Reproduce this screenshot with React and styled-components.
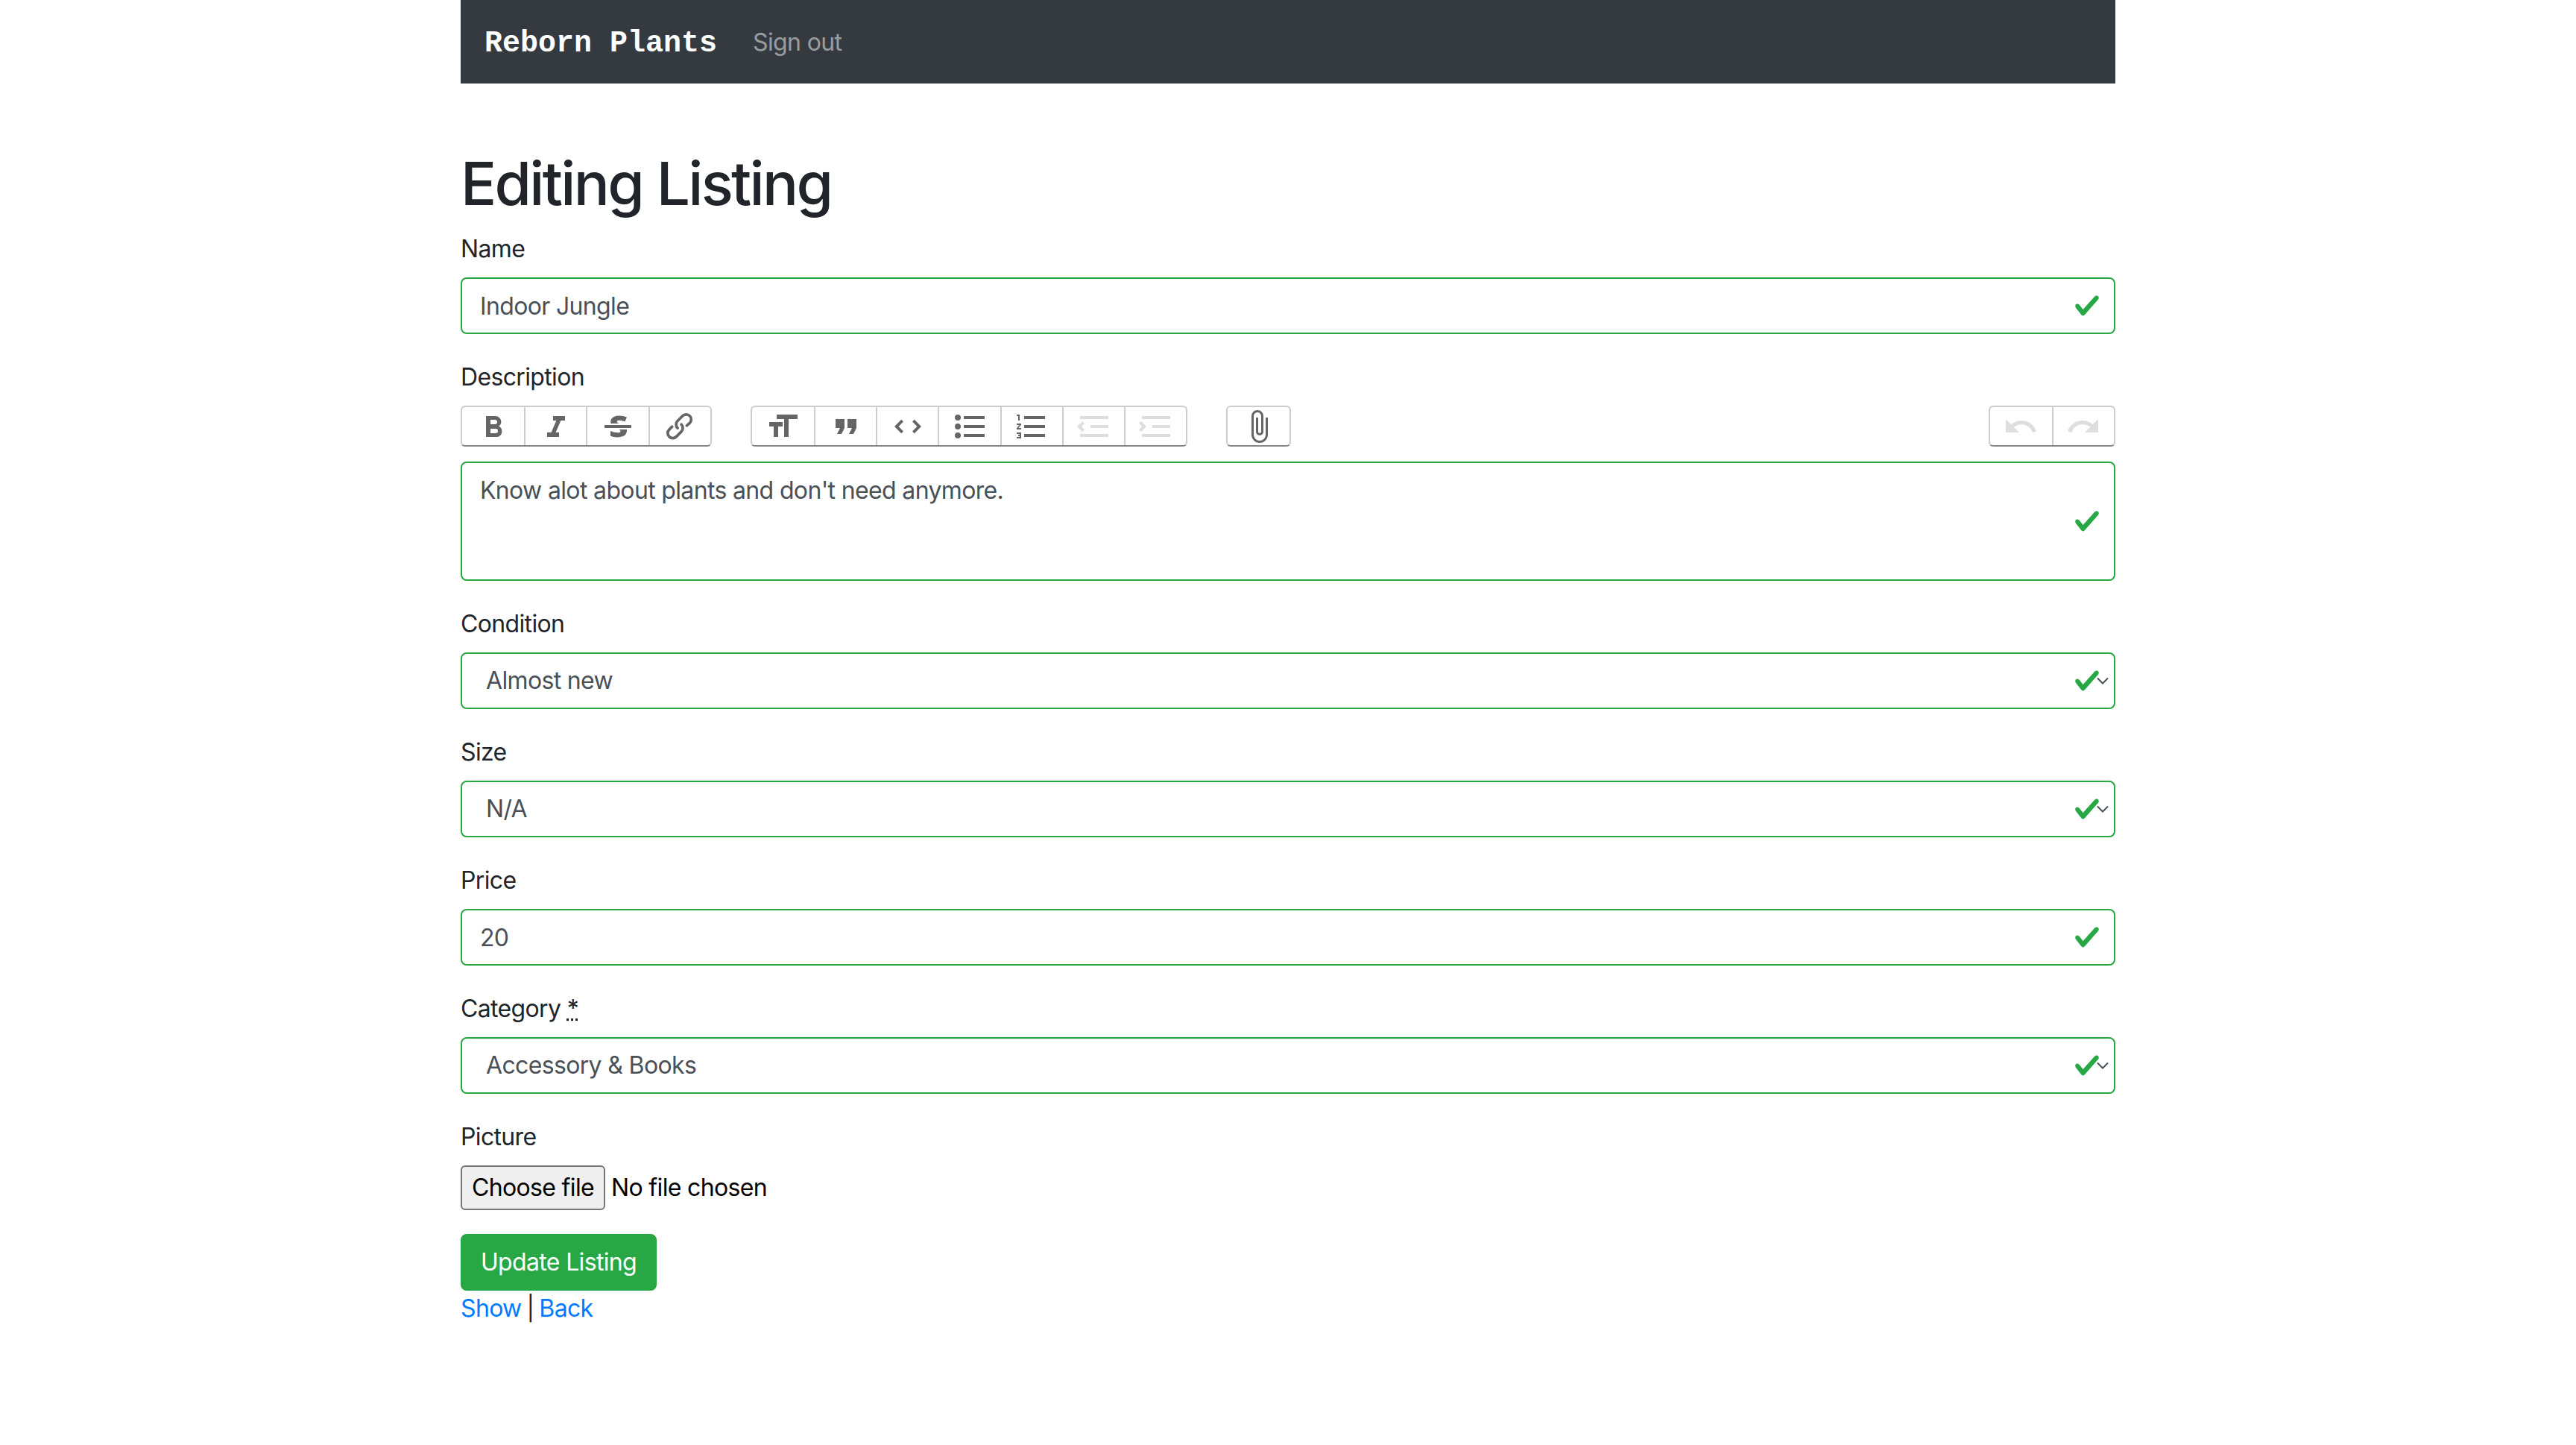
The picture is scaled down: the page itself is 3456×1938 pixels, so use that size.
import React from "react";
import styled, { createGlobalStyle } from "styled-components";

const GlobalStyle = createGlobalStyle`
  * { box-sizing: border-box; }
  body {
    margin: 0;
    background: #fff;
    color: #212529;
    font-family: Inter, "Liberation Sans", sans-serif;
    font-size: 32px;
    line-height: 1.5;
    letter-spacing: -0.65px;
  }
`;

const icons = {
  bold: "M15.6 11.8c1-.7 1.6-1.8 1.6-2.8a4 4 0 0 0-4-4H7v14h7c2.1 0 3.7-1.7 3.7-3.8 0-1.5-.8-2.8-2.1-3.4zM10 7.5h3a1.5 1.5 0 1 1 0 3h-3v-3zm3.5 9H10v-3h3.5a1.5 1.5 0 1 1 0 3z",
  italic: "M10 5v3h2.2l-3.4 8H6v3h8v-3h-2.2l3.4-8H18V5h-8z",
  strike: "M12.73 14l.28.14c.26.15.45.3.57.44.12.14.18.3.18.5 0 .3-.15.56-.44.75-.3.2-.76.3-1.39.3A13.52 13.52 0 0 1 7 14.95v3.37a10.64 10.64 0 0 0 4.84.88c1.26 0 2.35-.19 3.28-.56.93-.37 1.64-.9 2.14-1.57s.74-1.45.74-2.32c0-.26-.02-.51-.06-.75h-5.21zm-5.5-4c-.08-.34-.12-.7-.12-1.1 0-1.29.52-2.3 1.58-3.02 1.05-.72 2.5-1.08 4.34-1.08 1.62 0 3.28.34 4.97 1l-1.3 2.93c-1.47-.6-2.73-.9-3.8-.9-.55 0-.96.08-1.2.26-.26.17-.38.38-.38.64 0 .27.16.52.48.74.17.12.53.3 1.05.53H7.23zM3 13h18v-2H3v2z",
  link: "M9.88 13.7a4.3 4.3 0 0 1 0-6.07l3.37-3.37a4.26 4.26 0 0 1 6.07 0 4.3 4.3 0 0 1 0 6.06l-1.96 1.72a.91.91 0 1 1-1.3-1.3l1.97-1.71a2.46 2.46 0 0 0-3.48-3.48l-3.38 3.37a2.46 2.46 0 0 0 0 3.48.91.91 0 1 1-1.3 1.3z M4.25 19.46a4.3 4.3 0 0 1 0-6.07l1.93-1.9a.91.91 0 1 1 1.3 1.3l-1.93 1.9a2.46 2.46 0 0 0 3.48 3.48l3.37-3.38c.96-.96.96-2.52 0-3.48a.91.91 0 1 1 1.3-1.3 4.3 4.3 0 0 1 0 6.07l-3.38 3.38a4.26 4.26 0 0 1-6.07 0z",
  heading: "M12 9v3H9v7H6v-7H3V9h9zM8 4h14v3h-6v12h-3V7H8V4z",
  quote: "M6 17h3l2-4V7H5v6h3zm8 0h3l2-4V7h-6v6h3z",
  code: "M18.2 12L15 15.2l1.4 1.4L21 12l-4.6-4.6L15 8.8l3.2 3.2zM5.8 12L9 8.8 7.6 7.4 3 12l4.6 4.6L9 15.2 5.8 12z",
  bullets: "M4 4a2 2 0 1 0 0 4 2 2 0 0 0 0-4zm0 6a2 2 0 1 0 0 4 2 2 0 0 0 0-4zm0 6a2 2 0 1 0 0 4 2 2 0 0 0 0-4zm4 3h14v-2H8v2zm0-6h14v-2H8v2zm0-8v2h14V5H8z",
  numbers: "M2 17h2v.5H3v1h1v.5H2v1h3v-4H2v1zm1-9h1V4H2v1h1v3zm-1 3h1.8L2 13.1v.9h3v-1H3.2L5 10.9V10H2v1zm5-6v2h14V5H7zm0 14h14v-2H7v2zm0-6h14v-2H7v2z",
  decrease: "M3 19h19v-2H3v2zm7-6h12v-2H10v2zm-8.3-.3l2.8 2.9L6 14.2 4 12l2-2-1.4-1.5L1 12l.7.7zM3 5v2h19V5H3z",
  increase: "M3 19h19v-2H3v2zm7-6h12v-2H10v2zm-6.9-1L1 14.2l1.4 1.4L6 12l-.7-.7-2.9-2.9L1 9.8 3.1 12zM3 5v2h19V5H3z",
  attach: "M16.5 6v11.5a4 4 0 1 1-8 0V5a2.5 2.5 0 0 1 5 0v10.5a1 1 0 1 1-2 0V6H10v9.5a2.5 2.5 0 0 0 5 0V5a4 4 0 1 0-8 0v12.5a5.5 5.5 0 0 0 11 0V6h-1.5z",
  undo: "M12.5 8c-2.6 0-5 1-6.9 2.6L2 7v9h9l-3.6-3.6A8 8 0 0 1 20 16l2.4-.8a10.5 10.5 0 0 0-10-7.2z",
  redo: "M18.4 10.6a10.5 10.5 0 0 0-16.9 4.6L4 16a8 8 0 0 1 12.7-3.6L13 16h9V7l-3.6 3.6z",
};

const Container = styled.div`
  width: 2280px;
  margin: 0 auto;
  padding: 0 30px;
`;

const Navbar = styled.nav`
  display: flex;
  align-items: center;
  height: 112px;
  padding: 0 32px;
  background: #343a40;
`;

const Brand = styled.a`
  margin-right: 48px;
  padding-top: 6px;
  color: #fff;
  font-family: "Liberation Mono", monospace;
  font-size: 40px;
  font-weight: 700;
  letter-spacing: 0;
`;

const NavLink = styled.a`
  padding-top: 2px;
  color: rgba(255, 255, 255, 0.5);
`;

const Title = styled.h1`
  margin: 86px 0 14px;
  font-size: 80px;
  font-weight: 500;
  line-height: 1.2;
  letter-spacing: -2.7px;
`;

const FormGroup = styled.div`
  margin-bottom: 32px;
`;

const Label = styled.label`
  display: block;
  margin-bottom: 14px;
  padding-top: 2px;
`;

const Abbr = styled.abbr`
  text-decoration: underline dotted;
`;

const Field = styled.div`
  position: relative;
  color: #495057;
`;

const Control = styled.input`
  display: block;
  width: 100%;
  height: 76px;
  padding: 12px 88px 12px 24px;
  border: 2px solid #28a745;
  border-radius: 8px;
  background: #fff;
  color: #495057;
  font: inherit;
  letter-spacing: inherit;
  outline: none;
`;

const SelectControl = styled(Control).attrs({ as: "select" })`
  appearance: none;
  padding-left: 32px;
`;

const Editor = styled.div`
  min-height: 160px;
  padding: 13px 88px 8px 24px;
  border: 2px solid #28a745;
  border-radius: 8px;
  color: #495057;
`;

const Check = styled.svg`
  position: absolute;
  top: 50%;
  right: 20px;
  width: 36px;
  height: 36px;
  transform: translateY(-50%);
  pointer-events: none;
`;

const Chevron = styled.svg`
  position: absolute;
  top: 33px;
  right: 9px;
  width: 16px;
  height: 10px;
  pointer-events: none;
`;

const Toolbar = styled.div`
  display: flex;
  margin-bottom: 20px;
`;

const ButtonGroup = styled.div`
  display: flex;
  margin-left: ${(p) => (p.$first ? "0" : "52px")};
  ${(p) => p.$push && "margin-left: auto;"}
  border: 2px solid #ccc;
  border-bottom-color: #888;
  border-radius: 6px;
`;

const ToolButton = styled.button`
  display: flex;
  align-items: center;
  justify-content: center;
  width: 83.2px;
  height: 51px;
  padding: 0;
  border: 0;
  border-left: 2px solid #ccc;
  background: transparent;
  &:first-child {
    border-left: 0;
  }
  svg {
    width: 48px;
    height: 48px;
    fill: #000;
    opacity: ${(p) => (p.disabled ? 0.125 : 0.6)};
  }
`;

const FileRow = styled.div`
  display: flex;
  align-items: center;
  gap: 8px;
  height: 60px;
  color: #000;
`;

const FileButton = styled.button`
  width: 194px;
  height: 60px;
  padding: 0;
  border: 2px solid #767676;
  border-radius: 6px;
  background: #efefef;
  color: #000;
  font: inherit;
  letter-spacing: inherit;
`;

const SubmitButton = styled.button`
  display: block;
  width: 263px;
  height: 76px;
  padding: 0;
  border: 2px solid #28a745;
  border-radius: 8px;
  background: #28a745;
  color: #fff;
  font: inherit;
  letter-spacing: inherit;
`;

const LinkRow = styled.div`
  color: #212529;
  word-spacing: -1.5px;
`;

const TextLink = styled.a`
  color: #007bff;
`;

const CheckIcon = () => (
  <Check viewBox="0 0 8 8">
    <path fill="#28a745" d="M2.3 6.73L.6 4.53c-.4-1.04.46-1.4 1.1-.8l1.1 1.4 3.4-3.8c.6-.63 1.6-.27 1.2.7l-4 4.6c-.43.5-.8.4-1.1.1z" />
  </Check>
);

const Tool = ({ name, disabled }) => (
  <ToolButton type="button" disabled={disabled}>
    <svg viewBox="0 0 24 24"><path d={icons[name]} /></svg>
  </ToolButton>
);

const SelectField = ({ value }) => (
  <Field>
    <SelectControl defaultValue={value}>
      <option>{value}</option>
    </SelectControl>
    <Chevron viewBox="0 0 16 10">
      <path d="M1 1.5l7 7 7-7" fill="none" stroke="#495057" strokeWidth="2" />
    </Chevron>
    <CheckIcon />
  </Field>
);

const App = () => {
  return (
    <Container>
      <GlobalStyle />
      <Navbar>
        <Brand>Reborn Plants</Brand>
        <NavLink>Sign out</NavLink>
      </Navbar>

      <Title>Editing Listing</Title>

      <FormGroup>
        <Label>Name</Label>
        <Field>
          <Control defaultValue="Indoor Jungle" />
          <CheckIcon />
        </Field>
      </FormGroup>

      <FormGroup>
        <Label>Description</Label>
        <Toolbar>
          <ButtonGroup $first>
            <Tool name="bold" />
            <Tool name="italic" />
            <Tool name="strike" />
            <Tool name="link" />
          </ButtonGroup>
          <ButtonGroup>
            <Tool name="heading" />
            <Tool name="quote" />
            <Tool name="code" />
            <Tool name="bullets" />
            <Tool name="numbers" />
            <Tool name="decrease" disabled />
            <Tool name="increase" disabled />
          </ButtonGroup>
          <ButtonGroup>
            <Tool name="attach" />
          </ButtonGroup>
          <ButtonGroup $push>
            <Tool name="undo" disabled />
            <Tool name="redo" disabled />
          </ButtonGroup>
        </Toolbar>
        <Field>
          <Editor>Know alot about plants and don't need anymore.</Editor>
          <CheckIcon />
        </Field>
      </FormGroup>

      <FormGroup>
        <Label>Condition</Label>
        <SelectField value="Almost new" />
      </FormGroup>

      <FormGroup>
        <Label>Size</Label>
        <SelectField value="N/A" />
      </FormGroup>

      <FormGroup>
        <Label>Price</Label>
        <Field>
          <Control defaultValue="20" />
          <CheckIcon />
        </Field>
      </FormGroup>

      <FormGroup>
        <Label>Category <Abbr title="required">*</Abbr></Label>
        <SelectField value="Accessory & Books" />
      </FormGroup>

      <FormGroup>
        <Label>Picture</Label>
        <FileRow>
          <FileButton type="button">Choose file</FileButton>
          <span>No file chosen</span>
        </FileRow>
      </FormGroup>

      <SubmitButton type="submit">Update Listing</SubmitButton>
      <LinkRow>
        <TextLink>Show</TextLink> | <TextLink>Back</TextLink>
      </LinkRow>
    </Container>
  );
};

export default App;
